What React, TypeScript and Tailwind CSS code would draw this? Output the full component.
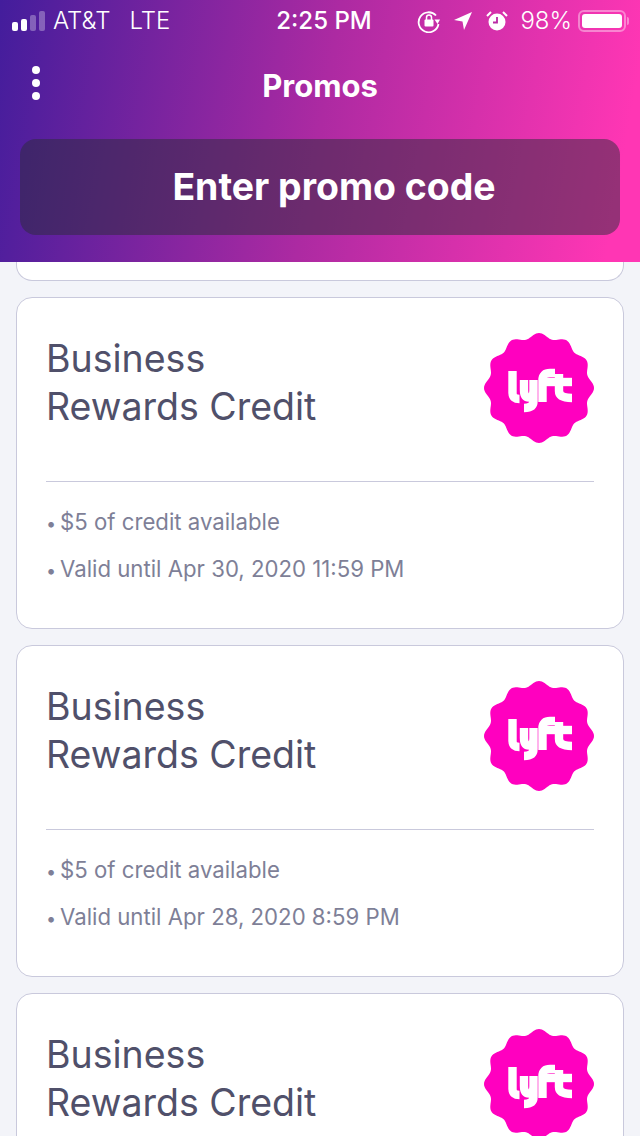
import React from "react";

function badgePath() {
  const pts: string[] = [];
  const n = 240;
  for (let i = 0; i < n; i++) {
    const t = (i / n) * Math.PI * 2;
    const r = 52.5 + 2.5 * Math.cos(12 * t);
    const x = 55 + r * Math.sin(t);
    const y = 55 - r * Math.cos(t);
    pts.push(`${i === 0 ? "M" : "L"}${x.toFixed(2)} ${y.toFixed(2)}`);
  }
  return pts.join(" ") + "Z";
}
const BADGE = badgePath();

function LyftBadge() {
  return (
    <svg width="110" height="110" viewBox="0 0 110 110" className="shrink-0">
      <path d={BADGE} fill="#ff00bf" />
      <g fill="none" stroke="#fff" strokeWidth="8.4">
        <path d="M28.500 38V60Q28.500 66 35.500 66" />
        <path d="M40 47V57Q40 64.500 45 64.500Q49.500 64.500 49.500 57V47M49.500 55V68Q49.500 75 40 75" />
        <path d="M58.500 69V47Q58.500 40 66 40H71" />
        <path d="M75 41V58Q75 65 88 65" />
        <path d="M56 49H88" />
      </g>
    </svg>
  );
}

function Card({ date }: { date: string }) {
  return (
    <div className="shrink-0 h-[332px] bg-white border border-[#c9c9dc] rounded-[16px] px-[29px]">
      <div className="h-[184px] border-b border-[#c9c9dc] flex justify-between pt-[37px]">
        <div className="text-[37.500px] leading-[48px] text-[#50506a] font-['Inter',sans-serif]">
          Business<br />Rewards Credit
        </div>
        <div className="-mt-[2px]"><LyftBadge /></div>
      </div>
      <div className="pt-[16px] text-[22.200px] text-[#7e7f97] font-['Inter',sans-serif]">
        <div className="h-[47px] leading-[47px]"><span className="inline-block w-[14px] text-[18px] leading-[18px]">•</span>$5 of credit available</div>
        <div className="h-[47px] leading-[47px]"><span className="inline-block w-[14px] text-[18px] leading-[18px]">•</span>Valid until {date}</div>
      </div>
    </div>
  );
}

export default function App() {
  return (
    <div className="w-[640px] h-[1136px] overflow-hidden bg-[#f3f4f9] flex flex-col font-['Inter',sans-serif]">
      <header className="h-[262px] shrink-0 bg-[linear-gradient(100deg,#431d9c,#ad2aa2_50%,#ff36b4_95%)] text-white">
        <div className="h-[42px] relative flex items-center pl-[12px] pr-[11px] text-[24px] font-['Inter',sans-serif]">
          <div className="flex items-end gap-[3px] h-[20px]">
            <span className="w-[6px] h-[9px] rounded-[2px] bg-white" />
            <span className="w-[6px] h-[12px] rounded-[2px] bg-white" />
            <span className="w-[6px] h-[16px] rounded-[2px] bg-white/30" />
            <span className="w-[6px] h-[20px] rounded-[2px] bg-white/30" />
          </div>
          <span className="ml-[8px] font-light text-[24px]">AT&amp;T</span>
          <span className="ml-[19px] font-light text-[24px]">LTE</span>
          <span className="absolute left-[8px] right-0 text-center font-medium text-[24px]">2:25 PM</span>
          <div className="ml-auto flex items-center">
            <svg width="24" height="24" viewBox="0 0 24 24" className="mr-[12px]">
              <path d="M19 6.500A10 10 0 1 0 21.500 15" fill="none" stroke="#fff" strokeWidth="1.800" />
              <path d="M23 10.500H17.500L20.500 15Z" fill="#fff" />
              <rect x="7.500" y="10.500" width="9" height="7" rx="1" fill="#fff" />
              <path d="M9.500 11V8.500A2.500 2.500 0 0 1 14.500 8.500V11" fill="none" stroke="#fff" strokeWidth="1.500" />
            </svg>
            <svg width="20" height="20" viewBox="0 0 20 20" className="mr-[13px]">
              <path d="M19 1L11 19L9.500 10.500L1 9Z" fill="#fff" />
            </svg>
            <svg width="22" height="22" viewBox="0 0 22 22" className="mr-[12px]">
              <circle cx="11" cy="12" r="8.500" fill="#fff" />
              <path d="M11 7V12.500H7" fill="none" stroke="#b92aa5" strokeWidth="1.800" />
              <path d="M1 6L5 2M21 6L17 2" stroke="#fff" strokeWidth="2" />
            </svg>
            <span className="font-light text-[24px]">98%</span>
            <div className="ml-[6px] w-[48px] h-[22px] rounded-[6px] border-2 border-white/40 p-[2px]">
              <div className="w-full h-full bg-white rounded-[3px]" />
            </div>
            <span className="w-[2px] h-[8px] rounded-r bg-white/40 ml-[1px]" />
          </div>
        </div>
        <div className="h-[89px] relative flex items-center justify-center">
          <div className="absolute left-[32px] top-[24px] flex flex-col gap-[5px]">
            <span className="w-[8px] h-[8px] rounded-full bg-white" />
            <span className="w-[8px] h-[8px] rounded-full bg-white" />
            <span className="w-[8px] h-[8px] rounded-full bg-white" />
          </div>
          <h1 className="text-[31px] font-bold">Promos</h1>
        </div>
        <div className="mx-[20px] mt-[8px] h-[96px] rounded-[16px] bg-[#2b2b3a]/50 flex items-center justify-center pl-[28px] text-[37.400px] font-bold">
          Enter promo code
        </div>
      </header>
      <div className="flex flex-col gap-[16px] px-[16px]">
        <div className="shrink-0 h-[19px] bg-white border border-t-0 border-[#c9c9dc] rounded-b-[16px]" />
        <Card date="Apr 30, 2020 11:59 PM" />
        <Card date="Apr 28, 2020 8:59 PM" />
        <Card date="Apr 30, 2020 11:59 PM" />
      </div>
    </div>
  );
}
